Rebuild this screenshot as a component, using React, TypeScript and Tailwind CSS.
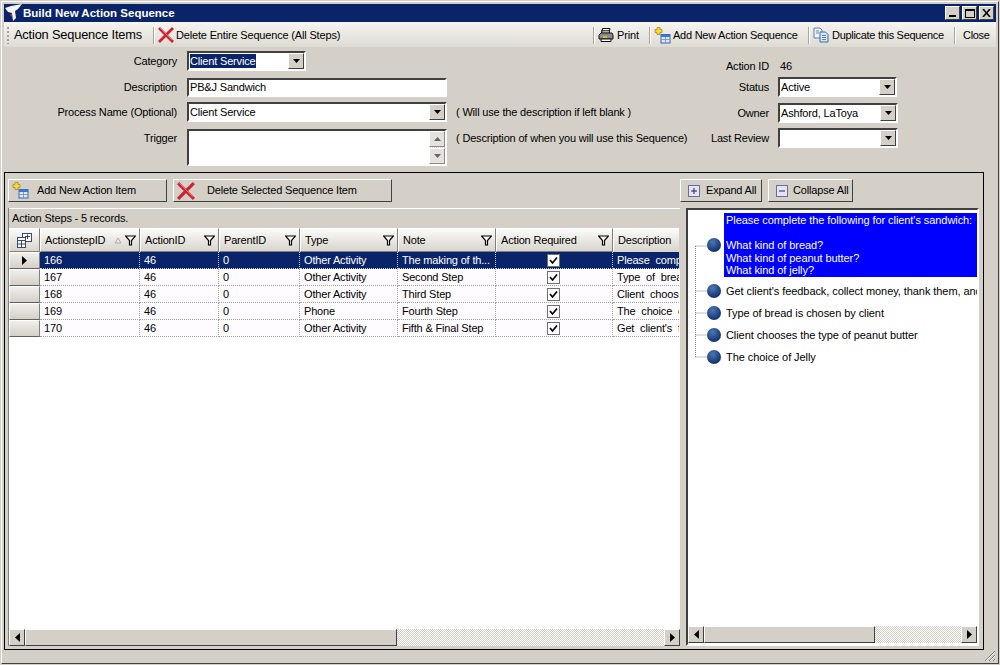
import type { ReactNode } from 'react';

const raised = 'border border-t-white border-l-white border-r-[#404040] border-b-[#404040] bg-[#d4d0c8]';
const hatch = 'bg-[repeating-conic-gradient(#d4d0c8_0_25%,#ffffff_0_50%)] bg-[length:2px_2px]';

const columns = 'grid grid-cols-[31px_100px_79px_81px_98px_98px_117px_66px]';

const steps = [
  { id: '166', type: 'Other Activity', note: 'The making of th...', description: 'Please complete the following' },
  { id: '167', type: 'Other Activity', note: 'Second Step', description: 'Type of bread is chosen' },
  { id: '168', type: 'Other Activity', note: 'Third Step', description: 'Client chooses the type' },
  { id: '169', type: 'Phone', note: 'Fourth Step', description: 'The choice of Jelly' },
  { id: '170', type: 'Other Activity', note: 'Fifth & Final Step', description: "Get client's feedback" }
];

function XIcon({ size = 16 }: { size?: number }) {
  return (
    <svg width={size} height={size} viewBox="0 0 16 16" className="shrink-0">
      <path d="M2 2 L14 14 M14 2 L2 14" stroke="#d02030" strokeWidth="2.8" strokeLinecap="square" />
      <path d="M2 1 L14 13" stroke="#f08088" strokeWidth="0.8" />
    </svg>
  );
}

function AddIcon() {
  return (
    <svg width="17" height="17" viewBox="0 0 17 17" className="shrink-0">
      <rect x="7" y="7.5" width="9" height="8.5" fill="#dfe8f8" stroke="#3a66b0" />
      <rect x="7" y="7.5" width="9" height="2.5" fill="#3a78d0" />
      <path d="M7 12.5 H16 M11.5 10 V16" stroke="#6a8cc8" strokeWidth="0.8" />
      <path d="M3 0.5 H6 V2.5 H8 V5.5 H6 V7.5 H3 V5.5 H1 V2.5 H3 Z" fill="#f8d838" stroke="#a88a20" strokeWidth="0.8" />
    </svg>
  );
}

function PrintIcon() {
  return (
    <svg width="16" height="16" viewBox="0 0 16 16" className="shrink-0">
      <path d="M4.5 1.5 H12 L11 7 H3.5 Z" fill="#fff" stroke="#111" />
      <path d="M1 8 L3 6 H14 L15 8 V12 H1 Z" fill="#8c8c8c" stroke="#111" />
      <path d="M3 12 H13 V14.5 H3 Z" fill="#fff" stroke="#111" />
      <path d="M3 3.5 H11 M3 5 H11" stroke="#111" strokeWidth="0.7" />
      <path d="M5 10 H9" stroke="#f0d020" strokeWidth="1.4" />
    </svg>
  );
}

function DuplicateIcon() {
  return (
    <svg width="16" height="16" viewBox="0 0 16 16" className="shrink-0">
      <path d="M1 1 H7 L9 3 V11 H1 Z" fill="#f0f4fc" stroke="#5a7cb8" />
      <path d="M7 5 H12.5 L15 7.5 V15 H7 Z" fill="#dbe6f8" stroke="#3a66b0" />
      <path d="M9 8.5 H13 M9 10.5 H13 M9 12.5 H13 M3 4 H6 M3 6 H6" stroke="#3a66b0" strokeWidth="0.8" />
    </svg>
  );
}

function Funnel() {
  return (
    <svg width="11" height="11" viewBox="0 0 11 11" className="shrink-0">
      <path d="M0.5 1 H10.5 L6.5 5.5 V10 H4.5 V5.5 Z" fill="#fff" stroke="#000" strokeWidth="1.2" />
    </svg>
  );
}

function Caret({ dir = 'down' }: { dir?: 'down' | 'up' | 'left' | 'right' }) {
  const points = {
    down: '1,1 8,1 4.5,5',
    up: '1,5 8,5 4.5,1',
    left: '6,0 6,9 1,4.5',
    right: '1,0 1,9 6,4.5'
  }[dir];
  const sideways = dir === 'left' || dir === 'right';
  return (
    <svg width={sideways ? 7 : 9} height={sideways ? 9 : 6} viewBox={sideways ? '0 0 7 9' : '0 0 9 6'}>
      <polygon points={points} fill="#000" />
    </svg>
  );
}

function Sunken({ className, children }: { className: string; children?: ReactNode }) {
  return (
    <div className={`flex border-2 border-t-[#404040] border-l-[#404040] border-r-white border-b-white bg-white ${className}`}>
      {children}
    </div>
  );
}

function Select({ value, className, selected }: { value?: string; className: string; selected?: boolean }) {
  return (
    <Sunken className={className}>
      <div className="flex-1 flex items-center pl-px overflow-hidden">
        <span className={selected ? 'bg-[#0a246a] text-white leading-[14px] pr-px' : ''}>{value}</span>
      </div>
      <div className={`${raised} w-[16px] shrink-0 flex items-center justify-center`}>
        <Caret />
      </div>
    </Sunken>
  );
}

function ToolSep() {
  return <div className="w-px h-[17px] bg-[#a8a59e] border-r border-white box-content" />;
}

function PushButton({ icon, label, className, gap }: { icon: ReactNode; label: string; className: string; gap: string }) {
  return (
    <div className={`${raised} h-[23px] flex items-center shrink-0 ${gap} ${className}`}>
      {icon}
      <span>{label}</span>
    </div>
  );
}

function HeaderCell({ label, sort }: { label: string; sort?: boolean }) {
  return (
    <div className="h-[24px] flex items-center pl-[4px] pr-[3px] border border-t-white border-l-white border-r-[#808080] border-b-[#808080] bg-gradient-to-b from-[#fbfbf9] to-[#d8d5cd]">
      <span className="flex-1 truncate">{label}</span>
      {sort && (
        <svg width="8" height="7" viewBox="0 0 8 7" className="mr-[3px]">
          <path d="M4 1 L7 6 H1 Z" fill="none" stroke="#b0aea6" />
        </svg>
      )}
      <Funnel />
    </div>
  );
}

function Scrollbar({ thumb, track, className }: { thumb: string; track: string; className: string }) {
  return (
    <div className={`flex h-[17px] ${className}`}>
      <div className={`${raised} w-[16px] shrink-0 flex items-center justify-center`}>
        <Caret dir="left" />
      </div>
      <div className={`${raised} ${thumb} shrink-0`} />
      <div className={`${hatch} ${track}`} />
      <div className={`${raised} w-[16px] shrink-0 flex items-center justify-center`}>
        <Caret dir="right" />
      </div>
    </div>
  );
}

function Bullet() {
  return <div className="w-[14px] h-[14px] rounded-full shrink-0 bg-[radial-gradient(circle_at_40%_30%,#4f76b4,#123672_70%)]" />;
}

function StepRow({ step, active }: { step: (typeof steps)[number]; active: boolean }) {
  const cell = `h-[17px] flex items-center pl-[4px] overflow-hidden border-b border-r border-dotted ${
    active ? 'bg-[#0a246a] text-white border-[#c8c8d8]' : 'border-[#a0a0a0]'
  }`;
  return (
    <div className={`${columns} ${active ? '' : 'bg-[#fffcff]'}`}>
      <div className="h-[17px] flex items-center justify-center border border-t-white border-l-white border-r-[#808080] border-b-[#606060] bg-gradient-to-b from-[#f0efea] to-[#d4d0c8]">
        {active && <Caret dir="right" />}
      </div>
      <div className={cell}>{step.id}</div>
      <div className={cell}>46</div>
      <div className={cell}>0</div>
      <div className={cell}>{step.type}</div>
      <div className={cell}>{step.note}</div>
      <div className={`${cell} justify-center pl-0`}>
        <svg width="13" height="13" viewBox="0 0 13 13" className="-ml-[6px]">
          <rect x="0.5" y="0.5" width="12" height="12" fill="#fff" stroke="#707070" />
          <path d="M3 6 L5.5 9 L10 3.5" fill="none" stroke="#000" strokeWidth="1.7" />
        </svg>
      </div>
      <div className={`${cell} border-r-0 [word-spacing:3px]`}>{step.description}</div>
    </div>
  );
}

export default function App() {
  return (
    <div className="w-[1000px] h-[665px] overflow-hidden bg-[#d4d0c8] p-px text-[11px] tracking-[-0.17px] whitespace-nowrap text-black font-['Liberation_Sans',Arial,sans-serif]">
      <div className="h-full border border-t-white border-l-white border-r-[#404040] border-b-[#404040] p-[2px] flex flex-col">
        <header className="h-[18px] shrink-0 bg-[#0a246a] flex items-center pr-[2px] text-white">
          <svg width="18" height="18" viewBox="0 0 18 18" className="ml-px shrink-0">
            <rect width="18" height="18" fill="#0a246a" />
            <path d="M0 4 L6 2 L17 0 L13 5 L10 7 L11 14 L8 17 L7 9 L3 8 Z" fill="#f4f4f4" />
            <path d="M5 11 L7 9 L7 13 Z" fill="#c03030" />
          </svg>
          <span className="flex-1 pt-px font-bold text-[11.5px] tracking-normal">Build New Action Sequence</span>
          <div className="flex gap-[2px]">
            <div className={`${raised} w-[15px] h-[14px] flex items-end justify-center pb-[2px]`}>
              <div className="w-[7px] h-[2px] bg-black" />
            </div>
            <div className={`${raised} w-[15px] h-[14px] flex items-center justify-center`}>
              <div className="w-[10px] h-[9px] border border-t-2 border-black" />
            </div>
            <div className={`${raised} w-[15px] h-[14px] flex items-center justify-center`}>
              <svg width="9" height="8" viewBox="0 0 9 8">
                <path d="M1 0 L8 8 M8 0 L1 8" stroke="#000" strokeWidth="1.6" />
              </svg>
            </div>
          </div>
        </header>

        <div className="h-[25px] shrink-0 flex items-center pt-px bg-gradient-to-b from-[#f6f5f1] to-[#dedbd4] pl-[3px]">
          <div className="w-[2px] h-[17px] bg-[repeating-linear-gradient(#a0a0a0_0_2px,transparent_2px_4px)]" />
          <span className="ml-[5px] w-[131px] shrink-0 text-[12.8px]">Action Sequence Items</span>
          <div className="ml-[8px]"><ToolSep /></div>
          <div className="ml-[3px]"><XIcon /></div>
          <span className="ml-[2px] w-[164px] shrink-0">Delete Entire Sequence (All Steps)</span>
          <div className="ml-[253px]"><ToolSep /></div>
          <div className="ml-[3px]"><PrintIcon /></div>
          <span className="ml-[3px] w-[22px] shrink-0">Print</span>
          <div className="ml-[10px]"><ToolSep /></div>
          <div className="ml-[3px]"><AddIcon /></div>
          <span className="ml-[2px] w-[126px] shrink-0 tracking-[-0.25px]">Add New Action Sequence</span>
          <div className="ml-[9px]"><ToolSep /></div>
          <div className="ml-[3px]"><DuplicateIcon /></div>
          <span className="ml-[3px] w-[113px] shrink-0 tracking-[-0.3px]">Duplicate this Sequence</span>
          <div className="ml-[9px]"><ToolSep /></div>
          <span className="ml-[7px] tracking-[-0.3px]">Close</span>
        </div>

        <div className="h-[125px] shrink-0 flex">
          <div className="w-[705px] shrink-0 pt-[4px]">
            <div className="flex items-center h-[20px]">
              <span className="w-[173px] text-right">Category</span>
              <Select value="Client Service" selected className="ml-[10px] w-[119px] h-[20px]" />
            </div>
            <div className="flex items-center h-[19px] mt-[7px]">
              <span className="w-[173px] text-right">Description</span>
              <Sunken className="ml-[10px] w-[260px] h-[19px] items-center pl-px">PB&amp;J Sandwich</Sunken>
            </div>
            <div className="flex items-center h-[20px] mt-[5px]">
              <span className="w-[173px] text-right">Process Name (Optional)</span>
              <Select value="Client Service" className="ml-[10px] w-[260px] h-[20px]" />
              <span className="ml-[9px]">( Will use the description if left blank )</span>
            </div>
            <div className="flex h-[37px] mt-[7px]">
              <span className="w-[173px] text-right leading-[18px]">Trigger</span>
              <Sunken className="ml-[10px] w-[260px] h-[37px] justify-end">
                <div className="w-[16px] flex flex-col">
                  <div className={`${raised} h-[16px] flex items-center justify-center opacity-60`}><Caret dir="up" /></div>
                  <div className={`${hatch} flex-1`} />
                  <div className={`${raised} h-[16px] flex items-center justify-center opacity-60`}><Caret /></div>
                </div>
              </Sunken>
              <span className="ml-[9px] leading-[18px]">( Description of when you will use this Sequence)</span>
            </div>
          </div>
          <div className="flex-1 pt-[12px]">
            <div className="flex items-center h-[14px]">
              <span className="w-[60px] text-right">Action ID</span>
              <span className="ml-[11px]">46</span>
            </div>
            <div className="flex items-center h-[20px] mt-[4px]">
              <span className="w-[60px] text-right">Status</span>
              <Select value="Active" className="ml-[9px] w-[119px] h-[20px]" />
            </div>
            <div className="flex items-center h-[20px] mt-[6px]">
              <span className="w-[60px] text-right">Owner</span>
              <Select value="Ashford, LaToya" className="ml-[9px] w-[120px] h-[20px]" />
            </div>
            <div className="flex items-center h-[20px] mt-[5px]">
              <span className="w-[60px] text-right">Last Review</span>
              <Select className="ml-[9px] w-[120px] h-[20px]" />
            </div>
          </div>
        </div>

        <main className="w-[980px] h-[478px] shrink-0 border border-black px-[3px]">
          <div className="flex mt-[6px]">
            <PushButton icon={<AddIcon />} label="Add New Action Item" gap="gap-[8px]" className="w-[159px] pl-[3px]" />
            <PushButton icon={<XIcon size={18} />} label="Delete Selected Sequence Item" gap="gap-[12px]" className="ml-[6px] w-[219px] pl-[3px]" />
            <PushButton
              icon={
                <svg width="12" height="12" viewBox="0 0 12 12" className="shrink-0">
                  <rect x="0.5" y="0.5" width="11" height="11" fill="#e4e4f4" stroke="#6a6aa8" />
                  <path d="M3 6 H9 M6 3 V9" stroke="#202060" />
                </svg>
              }
              label="Expand All"
              gap="gap-[6px]"
              className="ml-[288px] w-[82px] pl-[7px]"
            />
            <PushButton
              icon={
                <svg width="12" height="12" viewBox="0 0 12 12" className="shrink-0">
                  <rect x="0.5" y="0.5" width="11" height="11" fill="#e4e4f4" stroke="#6a6aa8" />
                  <path d="M3 6 H9" stroke="#202060" />
                </svg>
              }
              label="Collapse All"
              gap="gap-[5px]"
              className="ml-[6px] w-[85px] pl-[7px]"
            />
          </div>

          <div className="flex h-[438px] mt-[6px]">
            <section className="w-[672px] shrink-0 flex flex-col border-l border-[#808080]">
              <div className="h-[20px] shrink-0 flex items-center pl-[3px] border-t border-white bg-[#d4d0c8]">
                Action Steps - 5 records.
              </div>
              <div className={columns}>
                <div className="h-[24px] flex items-center justify-center border border-t-white border-l-white border-r-[#808080] border-b-[#808080] bg-gradient-to-b from-[#fbfbf9] to-[#d8d5cd]">
                  <svg width="15" height="15" viewBox="0 0 15 15">
                    <rect x="5.5" y="0.5" width="9" height="8" fill="#fff" stroke="#3a4a78" />
                    <rect x="0.5" y="4.5" width="8" height="10" fill="#fff" stroke="#3a4a78" />
                    <path d="M0.5 7.5 H8.5 M0.5 11 H8.5 M4.5 7.5 V14.5" stroke="#3a4a78" />
                    <path d="M8 3.5 H13 M10.5 1.5 V6" stroke="#3a4a78" />
                  </svg>
                </div>
                <HeaderCell label="ActionstepID" sort />
                <HeaderCell label="ActionID" />
                <HeaderCell label="ParentID" />
                <HeaderCell label="Type" />
                <HeaderCell label="Note" />
                <HeaderCell label="Action Required" />
                <div className="h-[24px] flex items-center pl-[4px] border-t border-l border-white bg-gradient-to-b from-[#fbfbf9] to-[#d8d5cd] overflow-hidden">
                  Description
                </div>
              </div>
              {steps.map((step, index) => (
                <StepRow key={step.id} step={step} active={index === 0} />
              ))}
              <div className="flex-1 bg-white" />
              <Scrollbar thumb="w-[372px]" track="w-[267px]" className="shrink-0" />
            </section>

            <div className="w-[6px] shrink-0" />

            <section className="relative w-[293px] shrink-0 flex flex-col border-2 border-t-[#404040] border-l-[#404040] border-r-white border-b-white bg-white tracking-[-0.07px]">
              <svg width="14" height="116" className="absolute left-[6px] top-[34px]">
                <path
                  d="M1.5 2 H14 M1.5 47 H14 M1.5 69 H14 M1.5 91 H14 M1.5 113 H14 M1.5 2 V113"
                  stroke="#808080"
                  strokeDasharray="1 1"
                  fill="none"
                />
              </svg>
              <div className="flex-1 pt-[3px] pl-[19px]">
                <div className="flex items-center">
                  <Bullet />
                  <div className="ml-[3px] w-[254px] h-[64px] bg-[#0000ff] text-white pl-[2px] pt-px leading-[12.5px]">
                    Please complete the following for client's sandwich:
                    <br />
                    <br />
                    What kind of bread?
                    <br />
                    What kind of peanut butter?
                    <br />
                    What kind of jelly?
                  </div>
                </div>
                <div className="mt-[3px]">
                  {[
                    "Get client's feedback, collect money, thank them, and",
                    'Type of bread is chosen by client',
                    'Client chooses the type of peanut butter',
                    'The choice of Jelly'
                  ].map((text) => (
                    <div key={text} className="flex items-center h-[22px]">
                      <Bullet />
                      <span className="ml-[5px] w-[252px] overflow-hidden">{text}</span>
                    </div>
                  ))}
                </div>
              </div>
              <Scrollbar thumb="w-[171px]" track="w-[88px]" className="shrink-0 mb-[1px]" />
            </section>
          </div>
        </main>

        <div className="flex-1 flex justify-end items-end">
          <svg width="12" height="12" viewBox="0 0 12 12">
            <path d="M11 1 L1 11 M11 5 L5 11 M11 9 L9 11" stroke="#808080" />
            <path d="M11 2 L2 11 M11 6 L6 11" stroke="#fff" />
          </svg>
        </div>
      </div>
    </div>
  );
}
